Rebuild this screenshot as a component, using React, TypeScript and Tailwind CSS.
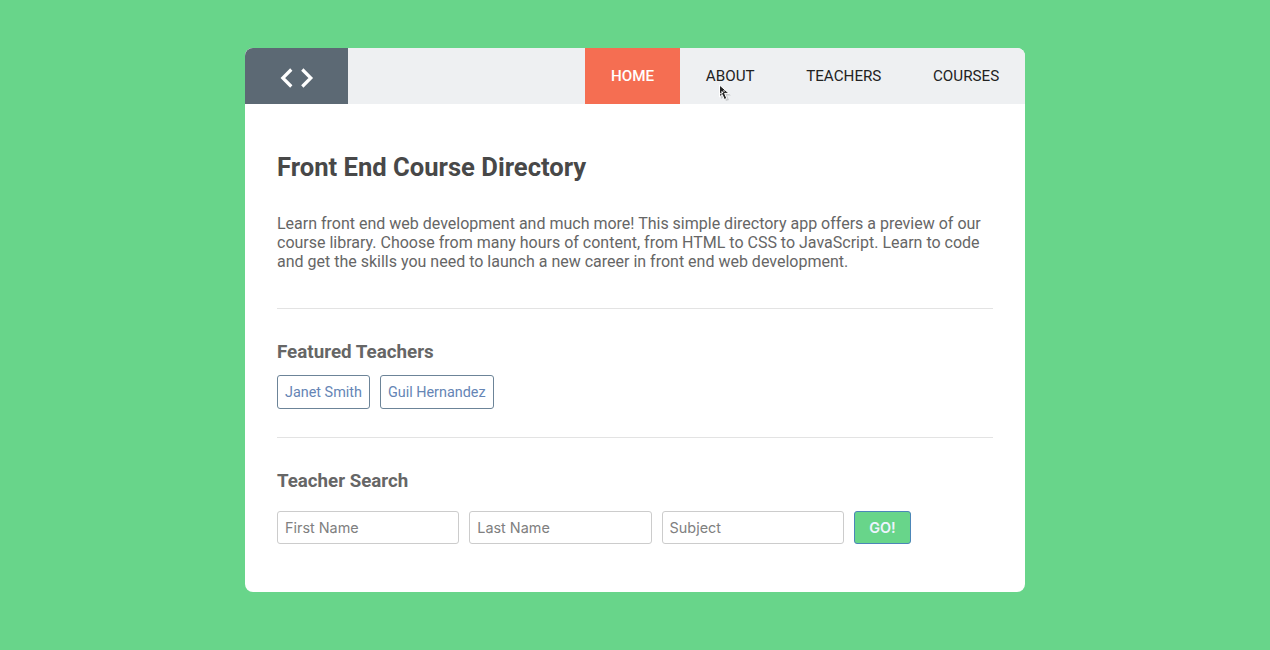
const navItems = ["Home", "About", "Teachers", "Courses"];
const teachers = ["Janet Smith", "Guil Hernandez"];
const fields = ["First Name", "Last Name", "Subject"];

function Logo() {
  return (
    <div className="flex w-[103px] items-center justify-center bg-[#5c6974]">
      <svg className="mt-[3px]" width="34" height="20" viewBox="0 0 34 20" fill="none" stroke="#fff" strokeWidth="3.200">
        <path d="M11.300 1.500 2.800 10l8.500 8.500M22.300 1.500 30.800 10l-8.500 8.500" />
      </svg>
    </div>
  );
}

function Cursor() {
  return (
    <svg className="absolute left-[38px] top-[36px]" width="14" height="19" viewBox="0 0 14 19">
      <path d="M3 3v12l3-2.500L8 17l3-1-2-4.500h4z" fill="#000" opacity="0.15" />
      <path d="M1.500 1v12l2.700-2.500L6.300 15.500l2.500-1.100-2.200-5H11z" fill="#222" stroke="#fff" strokeWidth="1" />
      <path d="M3.500 7.500l1.500 1.500M5.500 6.500l1 1M2.500 10l1-1" stroke="#fff" strokeWidth="1.200" />
    </svg>
  );
}

export default function App() {
  return (
    <div className="flex h-[650px] justify-center bg-[#68d58a] pt-12 font-['Roboto',sans-serif] text-[#666]">
      <div className="h-[544px] w-[780px] overflow-hidden rounded-lg bg-white">
        <header className="flex h-14 justify-between bg-[#eef0f2]">
          <Logo />
          <nav className="flex text-[15.2px] uppercase text-[#222]">
            {navItems.map((item, i) => (
              <a
                key={item}
                className={
                  i === 0
                    ? "flex w-[95px] items-center justify-center bg-[#f56e52] font-medium text-white"
                    : "relative flex items-center px-[25.800px]"
                }
              >
                {item}
                {i === 1 && <Cursor />}
              </a>
            ))}
          </nav>
        </header>
        <main className="px-8 pt-[46px]">
          <h1 className="text-[25.6px] font-bold leading-[34px] text-[#484848]">Front End Course Directory</h1>
          <p className="mt-[30px] text-base leading-[19px]">
            Learn front end web development and much more! This simple directory app offers a preview of our
            <br />
            course library. Choose from many hours of content, from HTML to CSS to JavaScript. Learn to code
            <br />
            and get the skills you need to launch a new career in front end web development.
          </p>
          <hr className="mt-[37px] border-[#e3e3e3]" />
          <h2 className="mt-[31px] text-[18.8px] font-bold leading-6">Featured Teachers</h2>
          <div className="mt-[11px] flex gap-2.5 text-[14.4px] text-[#6585b5]">
            {teachers.map((name) => (
              <a key={name} className="flex h-[34px] items-center rounded-[3px] border border-[#6c8498] px-[7px] pt-px">
                {name}
              </a>
            ))}
          </div>
          <hr className="mt-7 border-[#e3e3e3]" />
          <h2 className="mt-[31px] text-[18.72px] font-bold leading-6">Teacher Search</h2>
          <form className="mt-[18px] flex gap-2.5 text-[14.4px]">
            {fields.map((field) => (
              <input
                key={field}
                placeholder={field}
                className="h-[33px] w-[182.3px] rounded-[3px] border border-[#ccc] px-[7px] font-['Inter',sans-serif] text-[14.4px] placeholder:text-[#808080]"
              />
            ))}
            <button
              type="button"
              className="h-[33px] w-[57px] rounded-[3px] border border-[#4c86b8] bg-[#68d58a] font-['Inter',sans-serif] text-[14.4px] font-semibold text-[#eef4ff]"
            >
              GO!
            </button>
          </form>
        </main>
      </div>
    </div>
  );
}
